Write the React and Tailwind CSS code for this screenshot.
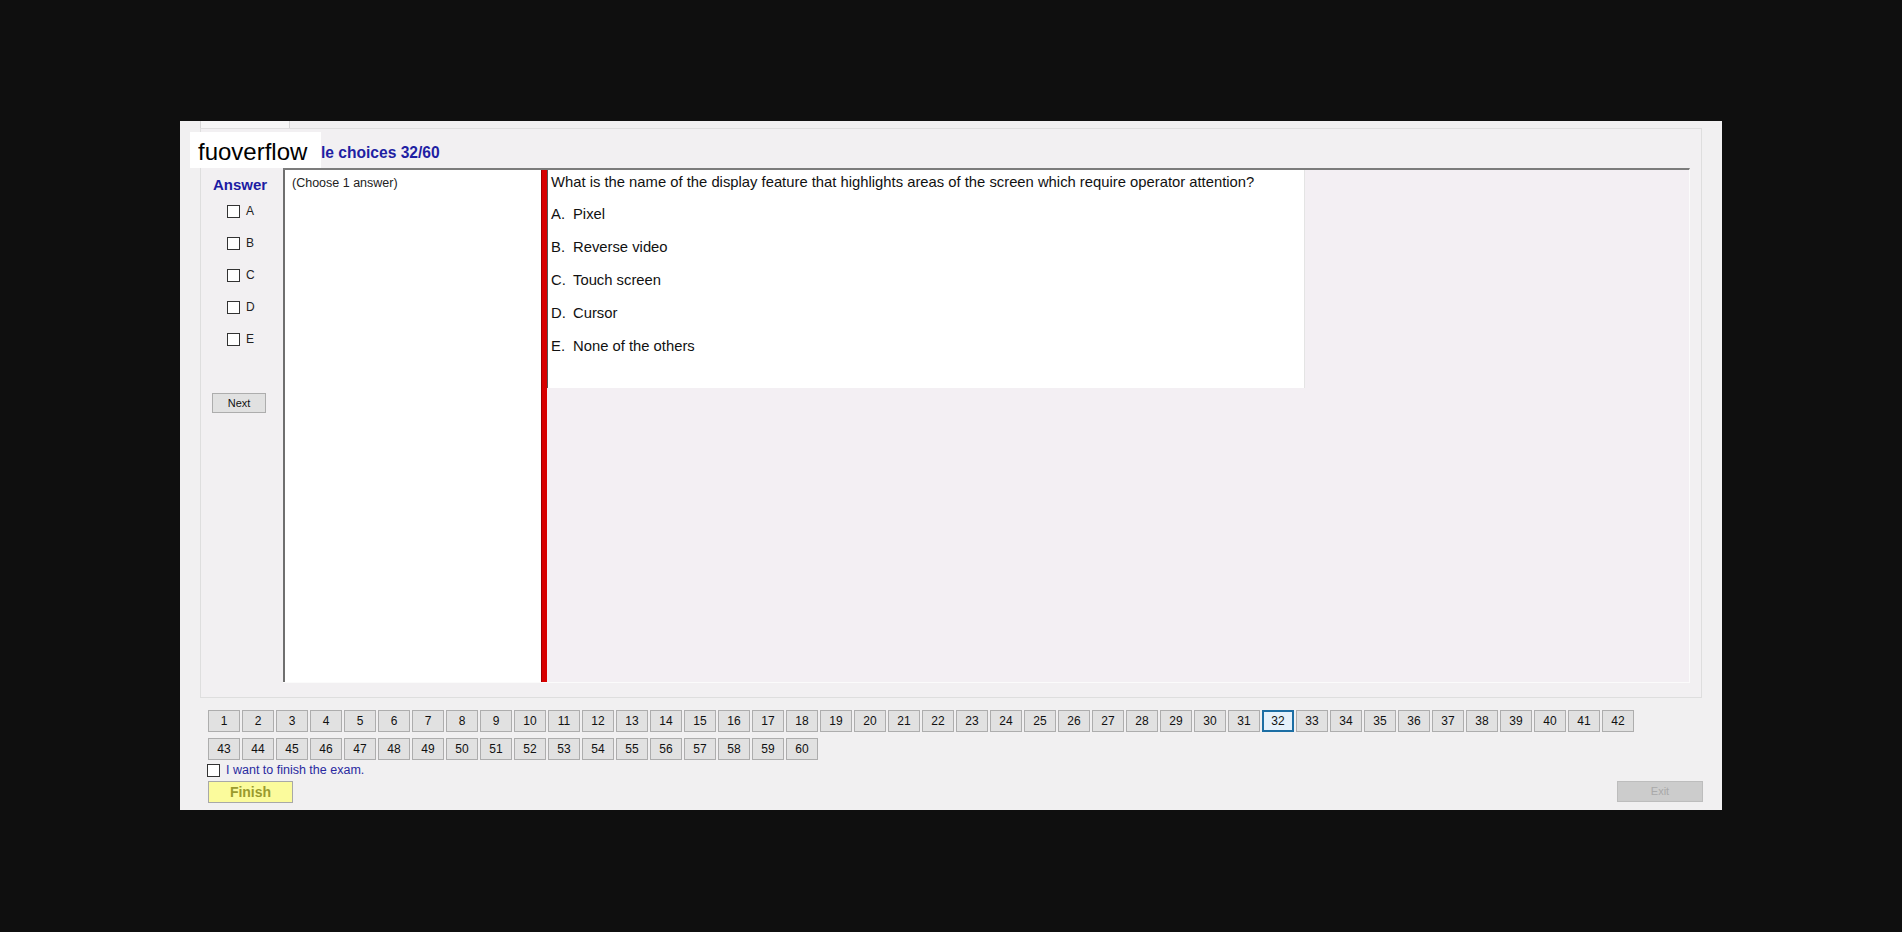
import React, { useState } from 'react';

const options = [
    { key: 'A', text: 'Pixel' },
    { key: 'B', text: 'Reverse video' },
    { key: 'C', text: 'Touch screen' },
    { key: 'D', text: 'Cursor' },
    { key: 'E', text: 'None of the others' },
];

const numbers = Array.from({ length: 60 }, (_, i) => i + 1);

const Box = ({ checked, onClick }) => (
    <button
        type="button"
        onClick={onClick}
        className="w-[13px] h-[13px] border border-[#333] bg-white flex items-center justify-center text-[10px] leading-none"
    >
        {checked ? '✓' : ''}
    </button>
);

const NumButton = ({ n, current, onClick }) => (
    <button
        type="button"
        onClick={onClick}
        className={
            n === current
                ? 'w-[32px] h-[22px] mr-[2px] border-2 border-[#1c6ea4] bg-[#e5f1fb] text-[12px] text-[#111] flex items-center justify-center'
                : 'w-[32px] h-[22px] mr-[2px] border border-[#adadad] bg-[#e1e1e1] text-[12px] text-[#111] flex items-center justify-center'
        }
    >
        {n}
    </button>
);

const App = () => {
    const [picked, setPicked] = useState({});
    const [current, setCurrent] = useState(32);
    const [finish, setFinish] = useState(false);

    return (
        <div className="min-h-screen bg-[#0f0f0f] pt-[121px] pl-[180px] font-['Liberation_Sans',Arial,sans-serif]">
            <div className="relative w-[1542px] h-[689px] bg-[#f1f0f1] flex flex-col">
                {/* watermark over the header */}
                <div className="absolute left-[10px] top-[11px] w-[131px] h-[36px] bg-white flex items-center pl-[8px] pt-[3px] text-[24px] text-black leading-none z-10">
                    fuoverflow
                </div>

                {/* tab strip */}
                <div className="h-[7px] pl-[20px] flex">
                    <div className="w-[90px] h-[7px] border-x border-[#d6d6d6] bg-[#f6f6f6]" />
                </div>

                {/* tab page */}
                <div className="ml-[20px] w-[1502px] h-[570px] border border-[#dedede] bg-[#f2f0f2] flex flex-col">
                    <div className="h-[39px] pl-[74px] pt-[15px] text-[15.6px] font-bold text-[#1f1fa3] leading-[18px]">
                        Multiple choices 32/60
                    </div>

                    <div className="flex h-[515px]">
                        {/* answer column */}
                        <div className="w-[82px] flex flex-col">
                            <div className="mt-[8px] h-[17px] text-center text-[15px] font-bold text-[#1c1ca3] leading-[17px] pr-[4px]">
                                Answer
                            </div>
                            <div className="mt-[2px] flex flex-col">
                                {options.map((o) => (
                                    <div key={o.key} className="h-[32px] pl-[26px] flex items-center">
                                        <Box
                                            checked={!!picked[o.key]}
                                            onClick={() => setPicked({ ...picked, [o.key]: !picked[o.key] })}
                                        />
                                        <span className="ml-[6px] text-[12px] text-[#222]">{o.key}</span>
                                    </div>
                                ))}
                            </div>
                            <button
                                type="button"
                                className="mt-[38px] ml-[11px] w-[54px] h-[20px] border border-[#adadad] bg-[#e1e1e1] text-[11px] text-[#111]"
                            >
                                Next
                            </button>
                        </div>

                        {/* question area */}
                        <div className="w-[1407px] flex border-t-2 border-[#7c7c7c] border-r border-r-[#fbfbfb] border-b border-b-[#fbfbfb]">
                            <div className="w-[258px] bg-white border-l-2 border-[#6f6f6f] pl-[7px] pt-[4px] text-[12.5px] text-[#222]">
                                (Choose 1 answer)
                            </div>
                            <div className="w-[6px] bg-[#d70000] border-l border-[#9a0000]" />
                            <div className="flex-1 bg-[#f3eff3] flex items-start">
                                <div className="w-[758px] h-[218px] bg-white border-l border-[#555] border-r border-r-[#e4e4e4] pl-[3px] pt-[3px] text-[14.8px] text-[#111]">
                                    <div className="leading-[18px] whitespace-nowrap">
                                        What is the name of the display feature that highlights areas of the screen which require operator attention?
                                    </div>
                                    {options.map((o, i) => (
                                        <div key={o.key} className={i === 0 ? 'mt-[14px] leading-[18px] flex' : 'mt-[15px] leading-[18px] flex'}>
                                            <span className="w-[22px]">{o.key}.</span>
                                            <span>{o.text}</span>
                                        </div>
                                    ))}
                                </div>
                            </div>
                        </div>
                    </div>
                </div>

                {/* question numbers */}
                <div className="ml-[28px] mt-[12px] flex">
                    {numbers.slice(0, 42).map((n) => (
                        <NumButton key={n} n={n} current={current} onClick={() => setCurrent(n)} />
                    ))}
                </div>
                <div className="ml-[28px] mt-[6px] flex">
                    {numbers.slice(42).map((n) => (
                        <NumButton key={n} n={n} current={current} onClick={() => setCurrent(n)} />
                    ))}
                </div>

                <div className="ml-[27px] mt-[3px] flex items-center">
                    <Box checked={finish} onClick={() => setFinish(!finish)} />
                    <span className="ml-[6px] text-[12.5px] text-[#2a2aa0] leading-[14px]">I want to finish the exam.</span>
                </div>

                <div className="mt-[4px] pl-[28px] pr-[19px] flex justify-between">
                    <button
                        type="button"
                        className="w-[85px] h-[22px] border border-[#a8a8a8] bg-[#fbfb9c] text-[14px] font-bold text-[#9a9a2e]"
                    >
                        Finish
                    </button>
                    <button
                        type="button"
                        disabled
                        className="w-[86px] h-[21px] border border-[#bdbdbd] bg-[#cccccc] text-[11px] text-[#a9a9a9]"
                    >
                        Exit
                    </button>
                </div>
            </div>
        </div>
    );
};

export default App;
